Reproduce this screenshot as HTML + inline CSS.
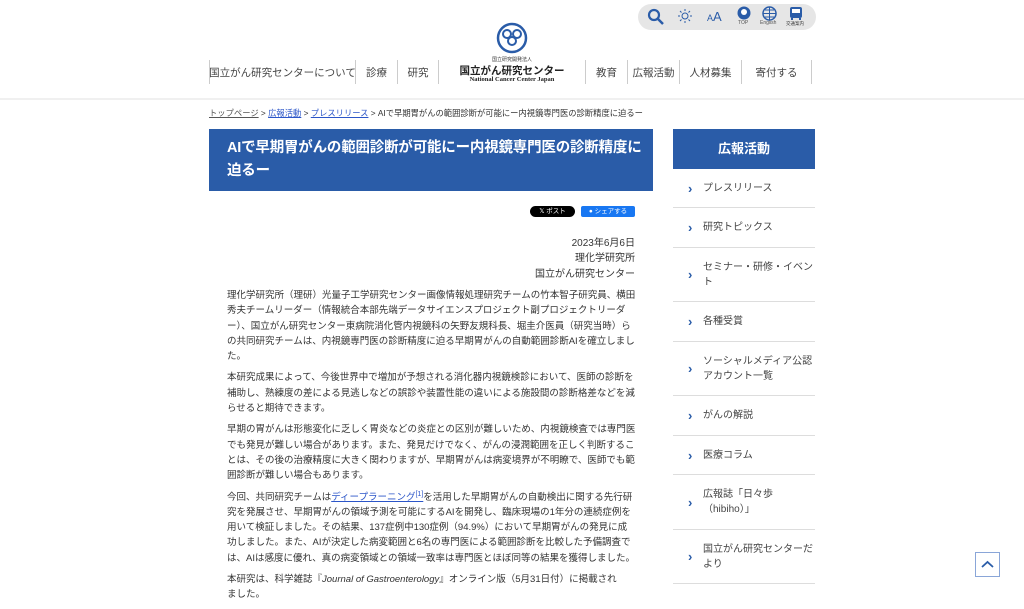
<!DOCTYPE html>
<html><head><meta charset="utf-8"><style>
*{margin:0;padding:0;box-sizing:border-box}
body{width:1024px;height:586px;overflow:hidden;background:#fff;font-family:"Liberation Sans","Noto Sans CJK JP",sans-serif;color:#333;position:relative}
.abs{position:absolute}
.tools{left:638px;top:4px;width:178px;height:26px;background:#e6e6e6;border-radius:13px}
.nav{top:60px;height:24px;font-size:10.5px;color:#444;display:flex;align-items:center;justify-content:center;border-left:1px solid #ccc;white-space:nowrap}
.hdline{left:0;top:98px;width:1024px;height:2px;background:#f0f0f0}
.bc{left:209px;top:107px;font-size:8.3px;color:#333;white-space:nowrap}
.bc a{color:#2b55c8;text-decoration:underline}
.title{left:209px;top:129px;width:444px;height:62px;background:#2a5ca8;color:#fff;font-weight:bold;font-size:14.5px;line-height:23px;padding:8px 4px 0 18px;letter-spacing:-0.2px}
.body{left:227px;top:288px;width:420px;font-size:9.5px;line-height:15.3px;color:#333;white-space:nowrap}
.body p{margin-bottom:6px}
.side{left:673px;top:129px;width:142px}
.sh{height:40px;background:#2a5ca8;color:#fff;font-weight:bold;font-size:13px;text-align:center;line-height:40px}
.si{border-bottom:1.5px solid #ddd;display:flex;align-items:center;font-size:10px;line-height:15px;color:#444;padding-left:30px;position:relative}
.si:before{content:"›";position:absolute;left:15px;color:#2a5ca8;font-weight:bold;font-size:13px}
</style></head><body>
<div class="abs tools"></div>
<svg class="abs" style="left:647px;top:8px" width="18" height="18" viewBox="0 0 18 18"><circle cx="7" cy="7" r="5" stroke="#2a5ca8" stroke-width="2.2" fill="none"/><path d="M11 11l5 5" stroke="#2a5ca8" stroke-width="2.5"/></svg>
<svg class="abs" style="left:678px;top:9px" width="14" height="14" viewBox="0 0 14 14"><circle cx="7" cy="7" r="3" stroke="#2a5ca8" fill="none"/><path d="M7 0v2M7 12v2M0 7h2M12 7h2M2 2l1.5 1.5M10.5 10.5L12 12M2 12l1.5-1.5M10.5 3.5L12 2" stroke="#2a5ca8"/></svg>
<div class="abs" style="left:707px;top:9px;color:#2a5ca8;font-size:13px"><span style="font-size:9px">A</span>A</div>
<svg class="abs" style="left:737px;top:6px" width="14" height="14"><circle cx="7" cy="7" r="6.5" fill="#2a5ca8"/><circle cx="7" cy="6" r="3" fill="#fff"/></svg>
<div class="abs" style="left:738px;top:20px;font-size:5px;color:#555">TOP</div>
<svg class="abs" style="left:762px;top:6px" width="15" height="15"><circle cx="7.5" cy="7.5" r="6.5" stroke="#2a5ca8" fill="none" stroke-width="1.5"/><path d="M1 7.5h13M7.5 1v13M3 4h9M3 11h9" stroke="#2a5ca8"/></svg>
<div class="abs" style="left:760px;top:20px;font-size:5px;color:#555">English</div>
<svg class="abs" style="left:789px;top:6px" width="14" height="15"><rect x="1" y="1" width="12" height="11" rx="2" fill="#2a5ca8"/><rect x="3" y="3" width="8" height="4" fill="#fff"/><path d="M3 12v2M11 12v2" stroke="#2a5ca8" stroke-width="2"/></svg>
<div class="abs" style="left:786px;top:21px;font-size:4.5px;color:#333">交通案内</div>
<svg class="abs" style="left:496px;top:22px" width="32" height="32"><circle cx="16" cy="16" r="14" fill="none" stroke="#2a5ca8" stroke-width="2.5"/><circle cx="11" cy="12" r="4" fill="none" stroke="#2a5ca8" stroke-width="2"/><circle cx="21" cy="12" r="4" fill="none" stroke="#2a5ca8" stroke-width="2"/><circle cx="16" cy="19" r="4" fill="none" stroke="#2a5ca8" stroke-width="2"/></svg>
<div class="abs" style="left:480px;top:56px;width:64px;text-align:center;font-size:5px;color:#333">国立研究開発法人</div>
<div class="abs" style="left:455px;top:63px;width:114px;text-align:center;font-size:10.5px;font-weight:bold;color:#222">国立がん研究センター</div>
<div class="abs" style="left:455px;top:76px;width:114px;text-align:center;font-size:6.5px;color:#222;font-family:'Liberation Serif',serif;font-weight:bold">National Cancer Center Japan</div>
<div class="abs nav" style="left:209px;width:146px">国立がん研究センターについて</div>
<div class="abs nav" style="left:355px;width:42px">診療</div>
<div class="abs nav" style="left:397px;width:42px;border-right:1px solid #ccc">研究</div>
<div class="abs nav" style="left:585px;width:42px">教育</div>
<div class="abs nav" style="left:627px;width:52px">広報活動</div>
<div class="abs nav" style="left:679px;width:62px">人材募集</div>
<div class="abs nav" style="left:741px;width:71px;border-right:1px solid #ccc">寄付する</div>
<div class="abs hdline"></div>
<div class="abs bc"><a style="color:#555">トップページ</a> &gt; <a>広報活動</a> &gt; <a>プレスリリース</a> &gt; AIで早期胃がんの範囲診断が可能にー内視鏡専門医の診断精度に迫るー</div>
<div class="abs title">AIで早期胃がんの範囲診断が可能にー内視鏡専門医の診断精度に迫るー</div>
<div class="abs" style="left:530px;top:206px;width:45px;height:11px;background:#000;color:#fff;border-radius:6px;font-size:6.5px;text-align:center;line-height:11px">𝕏 ポスト</div>
<div class="abs" style="left:581px;top:206px;width:54px;height:11px;background:#1877f2;color:#fff;border-radius:2px;font-size:6.5px;text-align:center;line-height:11px">● シェアする</div>
<div class="abs" style="left:440px;top:236px;width:195px;text-align:right;font-size:10px;line-height:15.3px">2023年6月6日<br>理化学研究所<br>国立がん研究センター</div>
<div class="abs body">
<p>理化学研究所（理研）光量子工学研究センター画像情報処理研究チームの竹本智子研究員、横田<br>秀夫チームリーダー（情報統合本部先端データサイエンスプロジェクト副プロジェクトリーダ<br>ー）、国立がん研究センター東病院消化管内視鏡科の矢野友規科長、堀圭介医員（研究当時）ら<br>の共同研究チームは、内視鏡専門医の診断精度に迫る早期胃がんの自動範囲診断AIを確立しまし<br>た。</p>
<p>本研究成果によって、今後世界中で増加が予想される消化器内視鏡検診において、医師の診断を<br>補助し、熟練度の差による見逃しなどの誤診や装置性能の違いによる施設間の診断格差などを減<br>らせると期待できます。</p>
<p>早期の胃がんは形態変化に乏しく胃炎などの炎症との区別が難しいため、内視鏡検査では専門医<br>でも発見が難しい場合があります。また、発見だけでなく、がんの浸潤範囲を正しく判断するこ<br>とは、その後の治療精度に大きく関わりますが、早期胃がんは病変境界が不明瞭で、医師でも範<br>囲診断が難しい場合もあります。</p>
<p>今回、共同研究チームは<a style="color:#2b55c8;text-decoration:underline">ディープラーニング<span style="font-size:7px;vertical-align:4px;line-height:0">[1]</span></a>を活用した早期胃がんの自動検出に関する先行研<br>究を発展させ、早期胃がんの領域予測を可能にするAIを開発し、臨床現場の1年分の連続症例を<br>用いて検証しました。その結果、137症例中130症例（94.9%）において早期胃がんの発見に成<br>功しました。また、AIが決定した病変範囲と6名の専門医による範囲診断を比較した予備調査で<br>は、AIは感度に優れ、真の病変領域との領域一致率は専門医とほぼ同等の結果を獲得しました。</p>
<p>本研究は、科学雑誌『<i>Journal of Gastroenterology</i>』オンライン版（5月31日付）に掲載され<br>ました。</p>
</div>
<div class="abs side">
<div class="sh">広報活動</div>
<div class="si" style="height:39px">プレスリリース</div>
<div class="si" style="height:40px">研究トピックス</div>
<div class="si" style="height:54px">セミナー・研修・イベント</div>
<div class="si" style="height:40px">各種受賞</div>
<div class="si" style="height:54px">ソーシャルメディア公認アカウント一覧</div>
<div class="si" style="height:40px">がんの解説</div>
<div class="si" style="height:39px">医療コラム</div>
<div class="si" style="height:55px">広報誌「日々歩（hibiho）」</div>
<div class="si" style="height:54px">国立がん研究センターだより</div>
</div>
<div class="abs" style="left:975px;top:552px;width:25px;height:25px;border:1px solid #8aa6d8;background:#fff"><svg width="23" height="23"><path d="M6 14l5.5-5 5.5 5" stroke="#2a5ca8" stroke-width="1.8" fill="none"/></svg></div>
</body></html>
